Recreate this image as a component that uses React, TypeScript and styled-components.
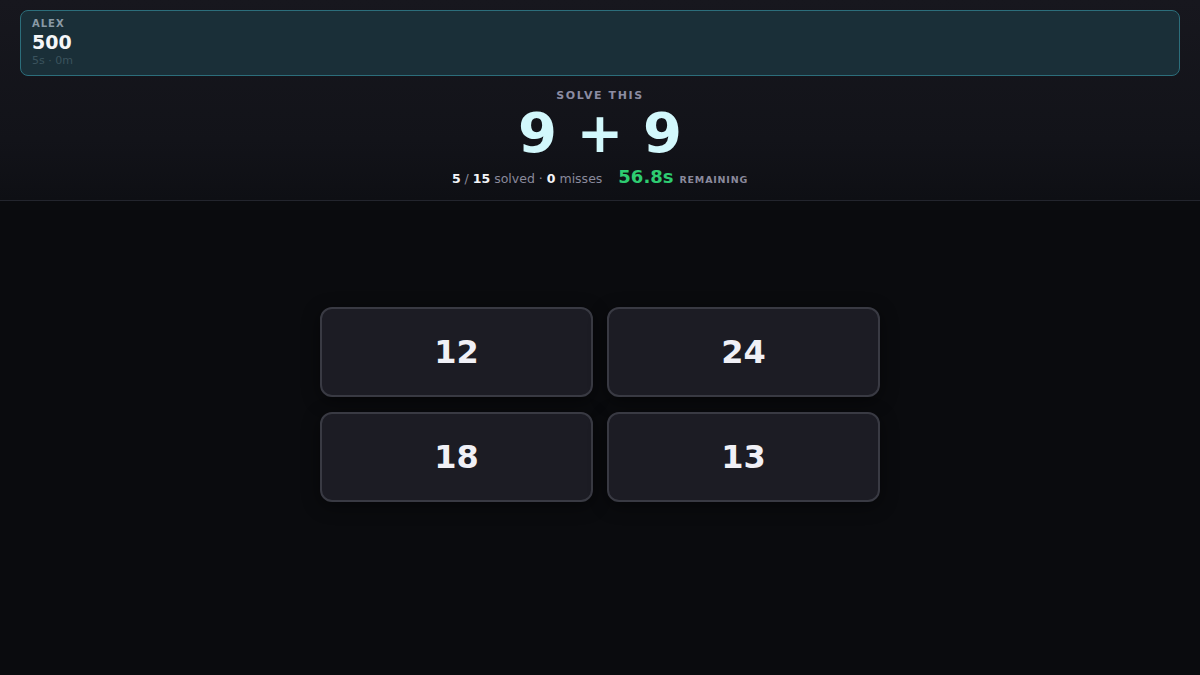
import React from 'react';
import styled, { createGlobalStyle } from 'styled-components';

const GlobalStyle = createGlobalStyle`
	html, body {
		margin: 0;
		padding: 0;
		background: #0a0b0e;
	}
	body {
		font-family: 'DejaVu Sans', 'Liberation Sans', sans-serif;
		color: #f0f0f5;
	}
`;

const Page = styled.div`
	width: 1200px;
	height: 675px;
	display: flex;
	flex-direction: column;
	background: #0a0b0e;
	overflow: hidden;
`;

const Header = styled.header`
	height: 201px;
	box-sizing: border-box;
	padding: 10px 20px 0;
	background: linear-gradient(180deg, #17171e 0%, #121319 70%, #0e0f14 100%);
	border-bottom: 1px solid #23252d;
	display: flex;
	flex-direction: column;
	align-items: center;
`;

const PlayerCard = styled.div`
	align-self: stretch;
	height: 66px;
	box-sizing: border-box;
	padding: 7px 11px;
	background: #1a2f38;
	border: 1px solid #2c6e7b;
	border-radius: 8px;
	display: flex;
	flex-direction: column;
`;

const PlayerName = styled.div`
	font-size: 10px;
	font-weight: bold;
	letter-spacing: 1px;
	color: #8a9aa6;
	line-height: 12px;
`;

const PlayerScore = styled.div`
	font-size: 19px;
	font-weight: bold;
	color: #f4f6f8;
	line-height: 24px;
`;

const PlayerMeta = styled.div`
	font-size: 11px;
	color: #3a535d;
	line-height: 14px;
`;

const Prompt = styled.div`
	margin-top: 13px;
	font-size: 11px;
	font-weight: bold;
	letter-spacing: 1.6px;
	color: #8c8ca2;
	line-height: 14px;
`;

const Problem = styled.div`
	font-size: 56px;
	font-weight: bold;
	color: #d2f8fc;
	line-height: 60px;
`;

const Stats = styled.div`
	margin-top: 3px;
	display: flex;
	align-items: baseline;
	gap: 16px;
`;

const Progress = styled.span`
	font-size: 12.5px;
	color: #8a8a9c;
`;

const Strong = styled.b`
	color: #f4f4f8;
`;

const Timer = styled.span`
	font-size: 18px;
	font-weight: bold;
	color: #2ecc71;
`;

const TimerLabel = styled.span`
	margin-left: 6px;
	font-size: 9.5px;
	font-weight: bold;
	letter-spacing: 0.8px;
	color: #8a8a9c;
`;

const Arena = styled.main`
	flex: 1;
	display: flex;
	align-items: flex-start;
	justify-content: center;
	padding-top: 106px;
`;

const Choices = styled.div`
	display: grid;
	grid-template-columns: repeat(2, 273px);
	grid-auto-rows: 90px;
	column-gap: 14px;
	row-gap: 15px;
`;

const Choice = styled.button`
	box-sizing: border-box;
	background: #1c1c24;
	border: 2px solid #393a43;
	border-radius: 12px;
	box-shadow: 0 4px 18px rgba(0, 0, 0, 0.45);
	font-family: 'DejaVu Sans', sans-serif;
	font-size: 32px;
	font-weight: bold;
	color: #f0f0f6;
	cursor: pointer;
`;

const answers = [12, 24, 18, 13];

const App = () => (
	<>
		<GlobalStyle />
		<Page>
			<Header>
				<PlayerCard>
					<PlayerName>ALEX</PlayerName>
					<PlayerScore>500</PlayerScore>
					<PlayerMeta>5s · 0m</PlayerMeta>
				</PlayerCard>
				<Prompt>SOLVE THIS</Prompt>
				<Problem>9 + 9</Problem>
				<Stats>
					<Progress>
						<Strong>5</Strong> / <Strong>15</Strong> solved · <Strong>0</Strong> misses
					</Progress>
					<span>
						<Timer>56.8s</Timer>
						<TimerLabel>REMAINING</TimerLabel>
					</span>
				</Stats>
			</Header>
			<Arena>
				<Choices>
					{answers.map((a) => (
						<Choice key={a}>{a}</Choice>
					))}
				</Choices>
			</Arena>
		</Page>
	</>
);

export default App;
